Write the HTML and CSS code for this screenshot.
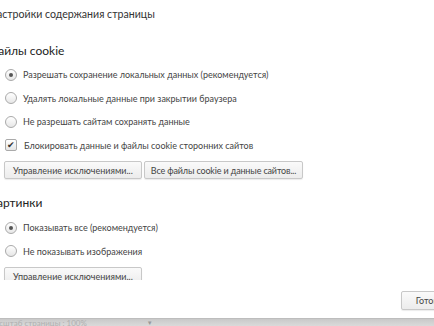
FILE: index.html
```html
<!DOCTYPE html>
<html><head><meta charset="UTF-8">
	<meta name="viewport" content="width=device-width, initial-scale=1">
	<title>Настройки содержания</title>
	<link rel="stylesheet" href="styles.css">
</head>
<body>
	<div class="dialog">
		<h1 class="title">Настройки содержания страницы</h1>
		<div class="content">
			<div class="section">
				<h2 class="section-title">Файлы cookie</h2>
				<label class="option"><span class="radio checked"></span>Разрешать сохранение локальных данных (рекомендуется)</label>
				<label class="option"><span class="radio"></span>Удалять локальные данные при закрытии браузера</label>
				<label class="option"><span class="radio"></span>Не разрешать сайтам сохранять данные</label>
				<label class="option"><span class="check">&#10004;</span>Блокировать данные и файлы cookie сторонних сайтов</label>
				<div class="buttons">
					<button type="button" class="btn">Управление исключениями...</button>
					<button type="button" class="btn narrow">Все файлы cookie и данные сайтов...</button>
				</div>
			</div>
			<div class="section">
				<h2 class="section-title">Картинки</h2>
				<label class="option"><span class="radio checked"></span>Показывать все (рекомендуется)</label>
				<label class="option"><span class="radio"></span>Не показывать изображения</label>
				<div class="buttons">
					<button type="button" class="btn">Управление исключениями...</button>
				</div>
			</div>
		</div>
		<div class="footer">
			<button type="button" class="btn done">Готово</button>
		</div>
	</div>
	<div class="statusbar">
		<span class="zoom">Масштаб страницы : 100%</span>
		<span class="arrow">&#9660;</span>
	</div>
</body></html>
```
FILE: styles.css
```css
body{
	margin: 0;
	width: 434px;
	height: 326px;
	overflow: hidden;
	font-family: Lato, "Open Sans", sans-serif;
	color: #333;
	background: #fff;
}
.dialog{
	height: 318px;
	margin-left: -11px;
	display: flex;
	flex-direction: column;
	overflow: hidden;
}
.title{
	margin: 0;
	padding-top: 8px;
	height: 24px;
	font-size: 10.6px;
	font-weight: normal;
	color: #333;
}
.content{
	height: 248px;
	overflow: hidden;
}
.section-title{
	margin: 11px 0 5px 0;
	font-size: 12px;
	font-weight: normal;
	color: #222;
}
.option{
	display: flex;
	align-items: center;
	height: 23.5px;
	padding-left: 16px;
	font-size: 9px;
	color: #444;
}
.radio{
	width: 10px;
	height: 10px;
	border: 1px solid #aaa;
	border-radius: 50%;
	background: linear-gradient(#fff, #e6e6e6);
	margin-right: 6px;
	position: relative;
}
.radio.checked::after{
	content: "";
	position: absolute;
	left: 3px;
	top: 3px;
	width: 4px;
	height: 4px;
	border-radius: 50%;
	background: #555;
}
.check{
	width: 10px;
	height: 10px;
	border: 1px solid #aaa;
	border-radius: 2px;
	background: linear-gradient(#fff, #e6e6e6);
	margin-right: 7px;
	font-size: 9px;
	line-height: 10px;
	text-align: center;
	color: #333;
}
.buttons{
	display: flex;
	gap: 2px;
	padding-left: 15px;
	margin-top: 4px;
}
.btn{
	height: 18px;
	padding: 0 8px;
	font-family: Lato, "Open Sans", sans-serif;
	font-size: 9px;
	color: #444;
	background: linear-gradient(#fafafa, #ececec);
	border: 1px solid #c8c8c8;
	border-radius: 2px;
	box-shadow: 0 1px 1px rgba(0,0,0,0.08);
}
.btn.narrow{
	padding: 0 6px;
	letter-spacing: -0.15px;
}
.section + .section{
	padding-top: 5px;
}
.section + .section .section-title{
	margin-bottom: 6px;
}
.footer{
	display: flex;
	justify-content: flex-end;
	padding-top: 11px;
	margin-right: -24px;
}
.done{
	height: 19px;
	padding: 0 14px;
}
.statusbar{
	height: 8px;
	background: linear-gradient(#c9c9c9, #dcdcdc);
	border-top: 1px solid #bdbdbd;
	font-size: 8px;
	line-height: 8px;
	color: #b0b0b0;
	overflow: hidden;
	display: flex;
	gap: 60px;
	margin-left: -12px;
}
.arrow{
	font-size: 6px;
	color: #999;
}
```
